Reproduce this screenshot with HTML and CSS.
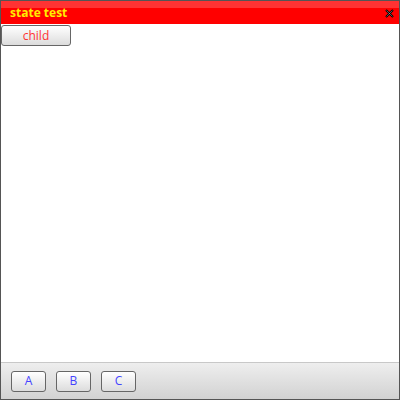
FILE: index.html
```html
<!DOCTYPE html>
<html>
<head>
<meta charset="utf-8">
<link rel="stylesheet" href="styles.css">
</head>
<body>
<div class="window">
  <div class="titlebar">
    <span class="title">state test</span>
    <span class="close"><svg width="9" height="9" viewBox="0 0 9 9"><path d="M1 1 L8 8 M8 1 L1 8" stroke="#000" stroke-width="2"/><path d="M1.5 1.5 L7.5 7.5 M7.5 1.5 L1.5 7.5" stroke="#fff" stroke-width="0.5" stroke-opacity="0.7"/></svg></span>
  </div>
  <div class="content">
    <button class="btn child">child</button>
  </div>
  <div class="toolbar">
    <button class="btn tb">A</button>
    <button class="btn tb">B</button>
    <button class="btn tb">C</button>
  </div>
</div>
</body>
</html>
```

FILE: styles.css
```css
html, body { margin: 0; padding: 0; }
body { width: 400px; height: 400px; font-family: "Open Sans", "DejaVu Sans", sans-serif; }
.window {
  box-sizing: border-box;
  width: 400px; height: 400px;
  border: 1px solid #555;
  display: flex; flex-direction: column;
  background: #fff;
}
.titlebar {
  height: 23px;
  background: linear-gradient(#ff3333 0, #ff3333 7px, #ff0000 7px, #ff0000 100%);
  display: flex; align-items: center; justify-content: space-between;
  padding: 0 5px 0 9px;
  box-sizing: border-box;
}
.title { color: #ffee00; font-weight: bold; font-size: 12px; line-height: 1; }
.close { width: 9px; height: 9px; display: flex; margin-top: 1px; }
.content { flex: 1; padding: 1px 0 0 0; }
.btn {
  font-family: "Open Sans", "DejaVu Sans", sans-serif;
  font-size: 12px;
  border: 1px solid #666;
  border-radius: 3px;
  background: linear-gradient(#ffffff, #dcdcdc);
  padding: 0;
  box-sizing: border-box;
  display: flex; align-items: center; justify-content: center;
  line-height: 1;
}
.child { width: 70px; height: 21px; color: #ff3333; }
.toolbar {
  height: 36px;
  border-top: 1px solid #c8c8c8;
  background: linear-gradient(#eeeeee, #d2d2d2);
  display: flex; align-items: center; gap: 10px;
  padding: 0 10px;
}
.tb { width: 35px; height: 21px; color: #4444ff; }
```
